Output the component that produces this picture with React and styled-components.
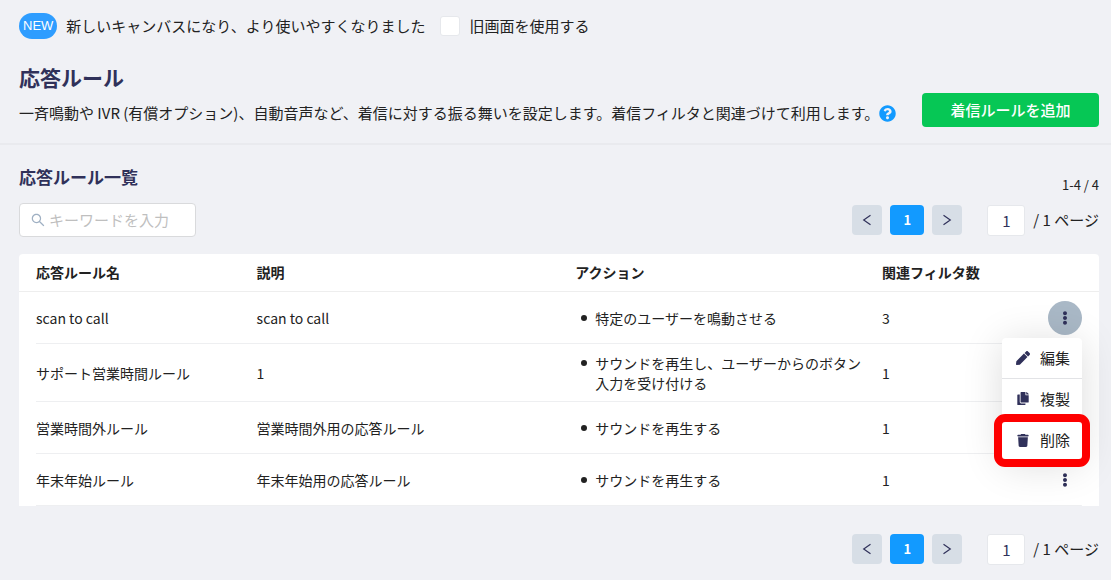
import React, { useState } from "react"
import styled, { createGlobalStyle } from "styled-components"
import { FaCopy, FaEllipsisV, FaPen, FaQuestionCircle } from "react-icons/fa"
import { FaTrash } from "react-icons/fa6"
import { AiOutlineSearch } from "react-icons/ai"

const GlobalStyle = createGlobalStyle`
  * {
    box-sizing: border-box;
  }

  body {
    margin: 0;
    background: #f0f1f5;
    color: #222;
    font-family: "Noto Sans CJK JP", sans-serif;
    font-size: 15px;
    line-height: 20px;
  }

  button,
  input {
    font: inherit;
    color: inherit;
  }
`

const PageHeader = styled.header`
  padding: 12px 12px 16px 19px;
  border-bottom: 2px solid #e9eaee;
`

const Notice = styled.div`
  display: flex;
  align-items: center;
  height: 28px;
`

const NewBadge = styled.span`
  padding: 0 4px;
  margin-right: 9px;
  border-radius: 13px;
  background: #2e9dff;
  color: #fff;
  font-family: "Liberation Sans", sans-serif;
  font-size: 13px;
  line-height: 26px;
`

const OldViewLabel = styled.label`
  display: flex;
  align-items: center;
  gap: 9px;
  margin-left: 15px;
`

const Checkbox = styled.input`
  appearance: none;
  width: 20px;
  height: 20px;
  margin: 0;
  border: 1px solid #e6e8ec;
  border-radius: 3px;
  background: #fff;

  &:checked {
    background: #129aff;
  }
`

const HeaderMain = styled.div`
  display: flex;
  justify-content: space-between;
  align-items: flex-end;
  margin-top: 21px;
`

const Title = styled.h1`
  margin: 0 0 10px;
  color: #30315a;
  font-size: 21px;
  line-height: 32px;
`

const Lead = styled.p`
  display: flex;
  align-items: center;
  margin: 0 0 4px;
`

const HelpButton = styled.button`
  display: flex;
  padding: 0;
  border: 0;
  background: none;
  color: #129aff;
  font-size: 17px;
`

const AddButton = styled.button`
  width: 177px;
  height: 34px;
  padding: 0;
  border: 0;
  border-radius: 4px;
  background: #06c755;
  color: #fff;
  font-weight: 500;
  white-space: nowrap;
`

const Content = styled.main`
  padding: 18px 12px 16px 19px;
`

const ListHeader = styled.div`
  display: flex;
  justify-content: space-between;
  height: 40px;
`

const SubTitle = styled.h2`
  margin: 0;
  color: #30315a;
  font-size: 17px;
  line-height: 28px;
`

const Count = styled.span`
  margin-top: 12px;
  font-size: 13px;
`

const Toolbar = styled.div`
  display: flex;
  justify-content: space-between;
  align-items: center;
  margin-bottom: 17px;
`

const SearchBox = styled.label`
  display: flex;
  align-items: center;
  gap: 3px;
  width: 177px;
  height: 34px;
  padding: 0 10px;
  border: 1px solid #d9dadc;
  border-radius: 4px;
  background: #fff;
  color: #9fb0c3;

  svg {
    flex: none;
    font-size: 16px;
  }
`

const SearchInput = styled.input`
  flex: 1;
  min-width: 0;
  padding: 0;
  border: 0;
  outline: 0;
  background: none;
  color: #222;

  &::placeholder {
    color: #bfbfbf;
  }
`

const Pager = styled.nav`
  display: flex;
  justify-content: flex-end;
  align-items: center;
  gap: 8px;
`

const PageButton = styled.button`
  display: flex;
  justify-content: center;
  align-items: center;
  width: ${({ $active }) => ($active ? "34px" : "30px")};
  height: 30px;
  padding: 0;
  border: 0;
  border-radius: 4px;
  background: ${({ $active }) => ($active ? "#129aff" : "#d7dee6")};
  color: ${({ $active }) => ($active ? "#fff" : "#30315a")};
  font-size: 13px;
  font-weight: 700;
`

const PageInput = styled.input`
  width: 38px;
  height: 31px;
  margin-left: 17px;
  padding: 0;
  border: 1px solid #e6e8ec;
  border-radius: 3px;
  background: #fff;
  color: #30315a;
  text-align: center;
`

const Table = styled.table`
  width: 100%;
  border-collapse: collapse;
  border-radius: 4px 4px 0 0;
  background: #fff;
  font-size: 14px;
  table-layout: fixed;
`

const HeadCell = styled.th`
  width: ${({ $width }) => $width};
  height: 37px;
  padding: 0;
  border-bottom: 1px solid #eee;
  text-align: left;

  &:first-child {
    padding-left: 17px;
  }
`

const Row = styled.tr`
  background: linear-gradient(#eeeff1, #eeeff1) 50% 100% / calc(100% - 34px) 1px no-repeat;
`

const Cell = styled.td`
  height: 52px;
  padding: 9px 17px 9px 0;

  &:first-child {
    padding-left: 17px;
  }
`

const ActionList = styled.ul`
  margin: 0;
  padding: 0 0 0 6px;
  list-style: none;
`

const ActionItem = styled.li`
  display: flex;
  gap: 8px;

  &::before {
    content: "";
    flex: none;
    width: 6px;
    height: 6px;
    margin-top: 7px;
    border-radius: 50%;
    background: #222;
  }
`

const MenuAnchor = styled.div`
  position: relative;
  width: 34px;
  margin-left: auto;
`

const MoreButton = styled.button`
  display: flex;
  justify-content: center;
  align-items: center;
  width: 34px;
  height: 34px;
  padding: 0;
  border: 0;
  border-radius: 50%;
  background: ${({ $open }) => ($open ? "#a9b8c6" : "none")};
  color: #30315a;
  font-size: 14px;
`

const Menu = styled.div`
  position: absolute;
  z-index: 2;
  top: calc(100% + 3px);
  right: 0;
  width: 80px;
  border-radius: 4px;
  background: #fff;
  box-shadow: 0 4px 40px rgba(0, 0, 0, 0.14);
`

const MenuItem = styled.button`
  position: relative;
  display: flex;
  align-items: center;
  gap: 9px;
  width: 100%;
  height: 41px;
  padding: 0 0 0 13px;
  border: 0;
  border-bottom: ${({ $marked }) => ($marked ? "0" : "1px solid #e2e3e6")};
  background: none;
  font-size: 15px;
  white-space: nowrap;

  svg {
    width: 16px;
    color: #30315a;
    font-size: ${({ $iconSize }) => $iconSize};
  }

  &::after {
    content: "";
    display: ${({ $marked }) => ($marked ? "block" : "none")};
    position: absolute;
    inset: -6px -8px;
    border: 8px solid #fe0000;
    border-radius: 11px;
  }
`

const Footer = styled.footer`
  margin-top: 28px;
`

const columns = [
  { label: "応答ルール名", width: "22%" },
  { label: "説明", width: "29.5%" },
  { label: "アクション", width: "28.4%" },
  { label: "関連フィルタ数", width: "12.8%" },
  { label: "", width: "auto" },
]

const rules = [
  { name: "scan to call", note: "scan to call", action: "特定のユーザーを鳴動させる", filters: 3 },
  {
    name: "サポート営業時間ルール",
    note: "1",
    action: "サウンドを再生し、ユーザーからのボタン入力を受け付ける",
    filters: 1,
  },
  { name: "営業時間外ルール", note: "営業時間外用の応答ルール", action: "サウンドを再生する", filters: 1 },
  { name: "年末年始ルール", note: "年末年始用の応答ルール", action: "サウンドを再生する", filters: 1 },
]

function Arrow({ next }) {
  return (
    <svg width="10" height="12" viewBox="0 0 10 12" fill="none" stroke="currentColor" strokeWidth="1.2">
      <path d={next ? "M1.5 1.3 8.3 6 1.5 10.7" : "M8.5 1.3 1.7 6l6.8 4.7"} />
    </svg>
  )
}

function Pagination() {
  return (
    <Pager>
      <PageButton type="button" aria-label="前へ">
        <Arrow />
      </PageButton>
      <PageButton type="button" $active>
        1
      </PageButton>
      <PageButton type="button" aria-label="次へ">
        <Arrow next />
      </PageButton>
      <PageInput defaultValue="1" aria-label="ページ" />
      <span>/ 1 ページ</span>
    </Pager>
  )
}

function RuleMenu() {
  return (
    <Menu>
      <MenuItem type="button" $iconSize="14px">
        <FaPen />
        編集
      </MenuItem>
      <MenuItem type="button" $iconSize="13px">
        <FaCopy />
        複製
      </MenuItem>
      <MenuItem type="button" $iconSize="13px" $marked>
        <FaTrash />
        削除
      </MenuItem>
    </Menu>
  )
}

function App() {
  const [openRow, setOpenRow] = useState(0)

  return (
    <>
      <GlobalStyle />
      <PageHeader>
        <Notice>
          <NewBadge>NEW</NewBadge>
          <span>新しいキャンバスになり、より使いやすくなりました</span>
          <OldViewLabel>
            <Checkbox type="checkbox" />
            旧画面を使用する
          </OldViewLabel>
        </Notice>
        <HeaderMain>
          <div>
            <Title>応答ルール</Title>
            <Lead>
              一斉鳴動や IVR (有償オプション)、自動音声など、着信に対する振る舞いを設定します。着信フィルタと関連づけて利用します。
              <HelpButton type="button" aria-label="ヘルプ">
                <FaQuestionCircle />
              </HelpButton>
            </Lead>
          </div>
          <AddButton type="button">着信ルールを追加</AddButton>
        </HeaderMain>
      </PageHeader>

      <Content>
        <ListHeader>
          <SubTitle>応答ルール一覧</SubTitle>
          <Count>1-4 / 4</Count>
        </ListHeader>
        <Toolbar>
          <SearchBox>
            <AiOutlineSearch />
            <SearchInput type="text" placeholder="キーワードを入力" aria-label="キーワードを入力" />
          </SearchBox>
          <Pagination />
        </Toolbar>

        <Table>
          <thead>
            <tr>
              {columns.map((col, index) => (
                <HeadCell key={index} $width={col.width}>
                  {col.label}
                </HeadCell>
              ))}
            </tr>
          </thead>
          <tbody>
            {rules.map((rule, index) => (
              <Row key={rule.name}>
                <Cell>{rule.name}</Cell>
                <Cell>{rule.note}</Cell>
                <Cell>
                  <ActionList>
                    <ActionItem>{rule.action}</ActionItem>
                  </ActionList>
                </Cell>
                <Cell>{rule.filters}</Cell>
                <Cell>
                  <MenuAnchor>
                    <MoreButton
                      type="button"
                      aria-label="メニュー"
                      $open={openRow === index}
                      onClick={() => setOpenRow(openRow === index ? null : index)}
                    >
                      <FaEllipsisV />
                    </MoreButton>
                    {openRow === index && <RuleMenu />}
                  </MenuAnchor>
                </Cell>
              </Row>
            ))}
          </tbody>
        </Table>

        <Footer>
          <Pagination />
        </Footer>
      </Content>
    </>
  )
}

export default App
